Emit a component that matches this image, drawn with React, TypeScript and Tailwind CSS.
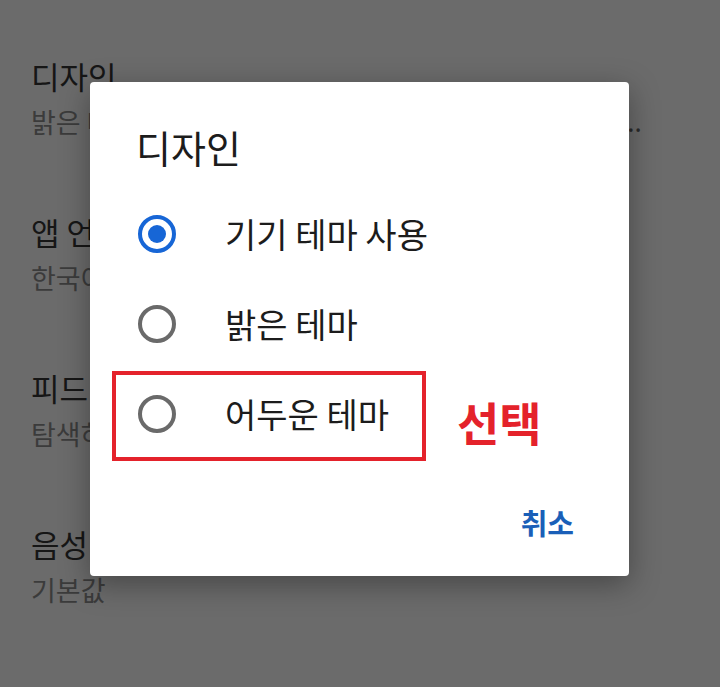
import React from 'react';

const font = { fontFamily: '"Noto Sans CJK KR", "Noto Sans", sans-serif' };

const items = [
  { title: '디자인', sub: '밝은 테마를 사용하거나 기기 설정에 따라 어두운 테마로 전환합니다', more: true },
  { title: '앱 언어', sub: '한국어' },
  { title: '피드', sub: '탐색하기' },
  { title: '음성', sub: '기본값' },
  { title: '위치', sub: '' },
];

function Radio({ checked }: { checked?: boolean }) {
  return checked ? (
    <span className="flex h-[38px] w-[38px] items-center justify-center rounded-full border-[4px] border-[#1766d6]">
      <span className="h-[18px] w-[18px] rounded-full bg-[#1766d6]" />
    </span>
  ) : (
    <span className="h-[38px] w-[38px] rounded-full border-[4px] border-[#6a6a6a]" />
  );
}

function Option({ label, checked }: { label: string; checked?: boolean }) {
  return (
    <div className="flex h-[90px] items-center">
      <div className="flex w-[89px] justify-start pl-[48px]">
        <Radio checked={checked} />
      </div>
      <span className="pl-[46px] text-[34px] leading-[46px] text-[#1c1c1c]">{label}</span>
    </div>
  );
}

export default function App() {
  return (
    <div className="relative h-[687px] w-[720px] overflow-hidden bg-[#6b6b6b]" style={font}>
      {/* settings list behind the dialog */}
      <div className="flex flex-col pl-[31px] pt-[55px]">
        {items.map((it) => (
          <div key={it.title} className="flex h-[156px] flex-col">
            <span className="text-[31px] leading-[42px] text-[#161616]">{it.title}</span>
            <div className="mt-[7px] flex text-[27px] leading-[36px] text-[#3b3b3b]">
              <span className={it.more ? 'w-[589px] overflow-hidden whitespace-nowrap' : 'whitespace-nowrap'}>{it.sub}</span>
              {it.more && <span className="font-['Noto_Sans'] text-[#2a2a2a]">...</span>}
            </div>
          </div>
        ))}
      </div>

      {/* dialog */}
      <div className="absolute left-[90px] top-[82px] flex h-[494px] w-[539px] flex-col rounded-[4px] bg-white shadow-[0_8px_30px_rgba(0,0,0,0.35)]">
        <div className="pl-[46px] pt-[40px] text-[38px] leading-[50px] text-[#1c1c1c]">디자인</div>
        <div className="mt-[17px] flex flex-col">
          <Option label="기기 테마 사용" checked />
          <Option label="밝은 테마" />
          <div className="relative">
            <Option label="어두운 테마" />
            <div className="absolute left-[22px] top-[2px] h-[90px] w-[314px] border-[4px] border-[#e4222b]" />
            <span className="absolute left-[367px] top-[24px] text-[46px] font-bold leading-[56px] text-[#e4222b]">선택</span>
          </div>
        </div>
        <div className="mt-auto flex justify-end pb-[34px] pr-[55px]">
          <span className="text-[29px] font-semibold leading-[40px] text-[#1a5fb8]">취소</span>
        </div>
      </div>
    </div>
  );
}
